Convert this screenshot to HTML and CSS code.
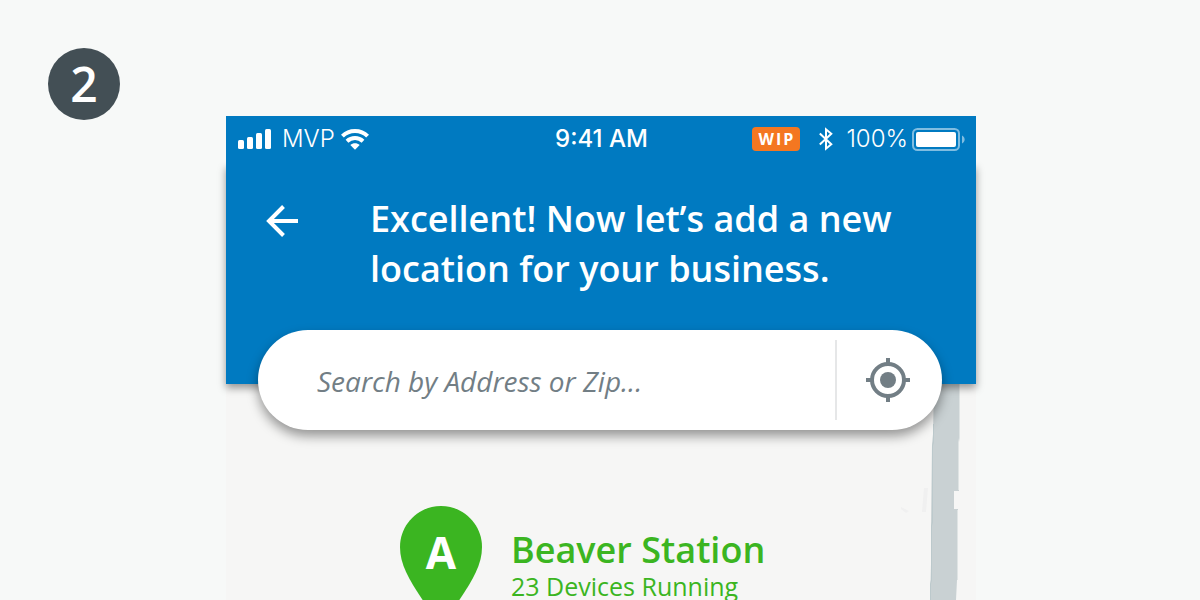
FILE: index.html
```html
<!DOCTYPE html>
<html lang="en">
<head>
<meta charset="utf-8">
<meta name="viewport" content="width=device-width, initial-scale=1">
<title>Add a new location</title>
<link rel="stylesheet" href="styles.css">
</head>
<body>
<div class="page">
  <div class="step">2</div>
  <main class="phone">
    <div class="status">
      <div class="status-left">
        <svg class="signal" viewBox="0 0 34 20" width="34" height="20" fill="#fff" aria-hidden="true"><rect x="0" y="11" width="6" height="9" rx="1.5"/><rect x="9" y="8" width="6" height="12" rx="1.5"/><rect x="18" y="4" width="6" height="16" rx="1.5"/><rect x="27" y="0" width="6" height="20" rx="1.5"/></svg>
        <span class="carrier">MVP</span>
        <svg class="wifi" viewBox="0 0 28 21" width="28" height="21" aria-hidden="true"><g fill="none" stroke="#fff" stroke-width="4"><path d="M1.4 7.2C8.2.3 19.8.3 26.6 7.2"/><path d="M6 12.3c4.500-4.300 11.500-4.300 16 0"/></g><path fill="#fff" d="M9.300 15.900c2.700-2.300 6.700-2.300 9.400 0L14 20.700z"/></svg>
      </div>
      <time class="clock">9:41 AM</time>
      <div class="status-right">
        <span class="wip">WIP</span>
        <svg class="bluetooth" viewBox="0 0 14 24" width="14" height="24" fill="none" stroke="#fff" stroke-width="2" aria-hidden="true"><path d="M.8 6.500 12.300 17.200 7 21.700V2.300l5.300 4.500L.8 17.500"/></svg>
        <span class="percent">100%</span>
        <svg class="battery" viewBox="0 0 53 23" width="53" height="23" aria-hidden="true"><rect x="1" y="1" width="46" height="21" rx="4.500" fill="none" stroke="#80bde1" stroke-width="2"/><rect x="4" y="4" width="40" height="15" rx="2" fill="#fff"/><path fill="#80bde1" d="M50 7.500c3.500 1.500 3.500 6.500 0 8z"/></svg>
      </div>
    </div>
    <header class="header">
      <button class="back" type="button" aria-label="Back"><svg viewBox="0 0 32 32" width="32" height="32" fill="none" stroke="#fff" stroke-width="4" aria-hidden="true"><path d="M32 16H3M17.500 1.500 3 16l14.500 14.500"/></svg></button>
      <h1 class="title">Excellent! Now let’s add a new location for your business.</h1>
    </header>
    <form class="search">
      <input class="search-input" type="text" aria-label="Search by address or zip" placeholder="Search by Address or Zip...">
      <button class="locate" type="button" aria-label="Use my location"><svg viewBox="0 0 44 44" width="44" height="44" aria-hidden="true"><circle cx="22" cy="22" r="8" fill="#727e85"/><circle cx="22" cy="22" r="16" fill="none" stroke="#727e85" stroke-width="4"/><path d="M22 0v6M22 38v6M0 22h6M38 22h6" stroke="#727e85" stroke-width="4"/></svg></button>
    </form>
    <section class="map">
      <svg class="road" viewBox="0 0 76 216" width="76" height="216" aria-hidden="true"><path fill="#c9d1d3" d="M34 0H60V50L59 54V107H54V125H58L57 196L56 216H30L31 180V140L32 60L33 50z"/><path fill="none" stroke="#bcc9cc" d="M33.500 40V58L32.500 62V138L31.500 142V196L30.500 200V216"/><path fill="none" stroke="#dfe4e4" d="M59.500 0V54L58.500 58V106M57.500 126V196"/><path fill="#f0f0f0" d="M24 104h4l-2 24h-4zM1 123l8 4-3 2-5-4z"/></svg>
      <div class="place">
        <div class="pin"><svg viewBox="0 0 82 118" width="82" height="118" aria-hidden="true"><path fill="#3bb521" d="M41 0C18.400 0 0 18.400 0 41c0 18 9.500 33.500 24 55l17 22 17-22c14.500-21.500 24-37 24-55C82 18.400 63.600 0 41 0z"/></svg><span class="pin-letter">A</span></div>
        <div class="place-text">
          <h2 class="place-name">Beaver Station</h2>
          <p class="place-info">23 Devices Running</p>
        </div>
      </div>
    </section>
  </main>
</div>
</body>
</html>
```
FILE: styles.css
```css
* { box-sizing: border-box; }
body {
  margin: 0;
  background: #f7f9f8;
  color: #fff;
  font-family: "Open Sans", "Noto Sans", sans-serif;
}
h1, h2, p { margin: 0; }
button { border: 0; padding: 0; background: none; cursor: pointer; }
svg { display: block; flex: none; }
.page {
  display: grid;
  grid-template-columns: 226fr 750fr 224fr;
  height: 100vh;
  overflow: hidden;
}
.step {
  width: 72px;
  height: 72px;
  margin: 48px 0 0 48px;
  border-radius: 50%;
  background: #434f55;
  font-size: 48px;
  font-weight: 600;
  line-height: 72px;
  text-align: center;
}
.phone {
  display: flex;
  flex-direction: column;
  margin-top: 116px;
  min-width: 0;
}
.status {
  display: grid;
  grid-template-columns: 1fr auto 1fr;
  align-items: center;
  position: relative;
  z-index: 2;
  height: 48px;
  padding: 0 11px 2px 12px;
  background: #007ac1;
  font-family: Inter, "Liberation Sans", sans-serif;
  font-size: 24px;
  line-height: 28px;
  white-space: nowrap;
}
.status-left, .status-right { display: flex; align-items: center; }
.status-right { justify-content: flex-end; }
.carrier { margin: 0 6px 0 10px; font-weight: 300; }
.clock { font-weight: 500; }
.percent { margin: 0 4px 0 13px; font-weight: 300; }
.wip {
  margin-right: 19px;
  padding: 0 5px 0 7px;
  border-radius: 4px;
  background: #f47721;
  font-family: "Open Sans", sans-serif;
  font-size: 16px;
  font-weight: 700;
  line-height: 24px;
  letter-spacing: 2px;
}
.header {
  display: flex;
  align-items: flex-start;
  gap: 72px;
  position: relative;
  height: 220px;
  padding: 30px 60px 0 40px;
  background: #007ac1;
  box-shadow: 0 4px 8px rgba(0, 0, 0, 0.4);
}
.back { margin-top: 11px; }
.title {
  font-size: 36px;
  font-weight: 600;
  line-height: 50px;
}
.search {
  display: flex;
  align-items: center;
  position: relative;
  z-index: 1;
  height: 100px;
  margin: -54px 34px 0 32px;
  border-radius: 50px;
  background: #fff;
  box-shadow: 0 6px 12px rgba(0, 0, 0, 0.4);
}
.search-input {
  flex: 1;
  min-width: 0;
  height: 100px;
  padding: 2px 24px 0 59px;
  border: 0;
  outline: 0;
  background: none;
  color: #434f55;
  font: italic 28px "Open Sans", sans-serif;
}
.search-input::placeholder { color: #727e85; opacity: 1; }
.locate {
  display: flex;
  align-items: center;
  height: 80px;
  padding: 0 32px 0 29px;
  border-left: 2px solid #e6e7e8;
}
.map {
  position: relative;
  z-index: -1;
  flex: 1;
  min-height: 170px;
  margin-top: -46px;
  padding: 122px 0 0 174px;
  background: #f6f6f5;
}
.road { position: absolute; top: 0; right: 0; }
.place { display: flex; gap: 29px; }
.pin { position: relative; }
.pin-letter {
  position: absolute;
  inset: 20px 0 auto;
  font-size: 44px;
  font-weight: 700;
  line-height: 52px;
  text-align: center;
}
.place-text { padding-top: 22px; color: #3bb521; }
.place-name { font-size: 36px; font-weight: 600; line-height: 44px; }
.place-info { font-size: 25px; line-height: 28px; }
```
